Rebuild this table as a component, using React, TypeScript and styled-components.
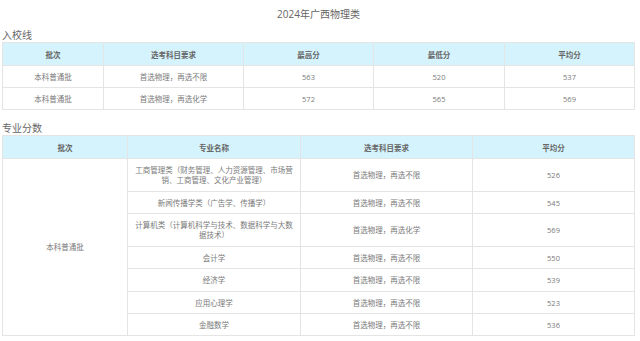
import React from 'react';
import styled, { createGlobalStyle } from 'styled-components';

const GlobalStyle = createGlobalStyle`
    html, body {
        margin: 0;
        padding: 0;
        background: #fff;
    }
    body {
        font-family: "Open Sans", "Noto Sans CJK SC", sans-serif;
    }
`;

const Page = styled.div`
    width: 633px;
    padding: 0 5px 0 2px;
`;

const Title = styled.h1`
    margin: 0;
    height: 28px;
    line-height: 28px;
    text-align: center;
    font-size: 10px;
    font-weight: 400;
    color: #666;
`;

const SectionLabel = styled.h2<{ $top?: number }>`
    margin: ${(p) => p.$top ?? 0}px 0 0;
    height: 14px;
    line-height: 14px;
    font-size: 10px;
    font-weight: 400;
    color: #666;
`;

const Table = styled.table`
    width: 100%;
    border-collapse: collapse;
    table-layout: fixed;
    font-size: 7.5px;
    color: #7a7a7a;
`;

const HeadCell = styled.th`
    height: 22px;
    padding: 0;
    background: #d5f3fc;
    border: 1px solid #e4e4e4;
    font-weight: 700;
    color: #666;
    text-align: center;
`;

const Row = styled.tr<{ $h: number }>`
    height: ${(p) => p.$h}px;
`;

const Cell = styled.td`
    padding: 0 5px;
    border: 1px solid #e4e4e4;
    text-align: center;
    line-height: 10px;
`;

const admission = [
    { batch: '本科普通批', req: '首选物理，再选不限', max: 563, min: 520, avg: 537 },
    { batch: '本科普通批', req: '首选物理，再选化学', max: 572, min: 565, avg: 569 },
];

const majors = [
    { name: '工商管理类（财务管理、人力资源管理、市场营销、工商管理、文化产业管理）', req: '首选物理，再选不限', avg: 526, h: 33 },
    { name: '新闻传播学类（广告学、传播学）', req: '首选物理，再选不限', avg: 545, h: 22 },
    { name: '计算机类（计算机科学与技术、数据科学与大数据技术）', req: '首选物理，再选化学', avg: 569, h: 33 },
    { name: '会计学', req: '首选物理，再选不限', avg: 550, h: 22 },
    { name: '经济学', req: '首选物理，再选不限', avg: 539, h: 23 },
    { name: '应用心理学', req: '首选物理，再选不限', avg: 523, h: 22 },
    { name: '金融数学', req: '首选物理，再选不限', avg: 536, h: 22 },
];

const App: React.FC = () => (
    <Page>
        <GlobalStyle />
        <Title>2024年广西物理类</Title>
        <SectionLabel>入校线</SectionLabel>
        <Table>
            <colgroup>
                <col style={{ width: 101 }} />
                <col style={{ width: 140 }} />
                <col style={{ width: 130 }} />
                <col style={{ width: 131 }} />
                <col />
            </colgroup>
            <thead>
                <tr>
                    <HeadCell>批次</HeadCell>
                    <HeadCell>选考科目要求</HeadCell>
                    <HeadCell>最高分</HeadCell>
                    <HeadCell>最低分</HeadCell>
                    <HeadCell>平均分</HeadCell>
                </tr>
            </thead>
            <tbody>
                {admission.map((r, i) => (
                    <Row key={i} $h={22}>
                        <Cell>{r.batch}</Cell>
                        <Cell>{r.req}</Cell>
                        <Cell>{r.max}</Cell>
                        <Cell>{r.min}</Cell>
                        <Cell>{r.avg}</Cell>
                    </Row>
                ))}
            </tbody>
        </Table>
        <SectionLabel $top={11}>专业分数</SectionLabel>
        <Table>
            <colgroup>
                <col style={{ width: 125 }} />
                <col style={{ width: 173 }} />
                <col style={{ width: 172 }} />
                <col />
            </colgroup>
            <thead>
                <tr>
                    <HeadCell>批次</HeadCell>
                    <HeadCell>专业名称</HeadCell>
                    <HeadCell>选考科目要求</HeadCell>
                    <HeadCell>平均分</HeadCell>
                </tr>
            </thead>
            <tbody>
                {majors.map((m, i) => (
                    <Row key={i} $h={m.h}>
                        {i === 0 && <Cell rowSpan={majors.length}>本科普通批</Cell>}
                        <Cell>{m.name}</Cell>
                        <Cell>{m.req}</Cell>
                        <Cell>{m.avg}</Cell>
                    </Row>
                ))}
            </tbody>
        </Table>
    </Page>
);

export default App;
